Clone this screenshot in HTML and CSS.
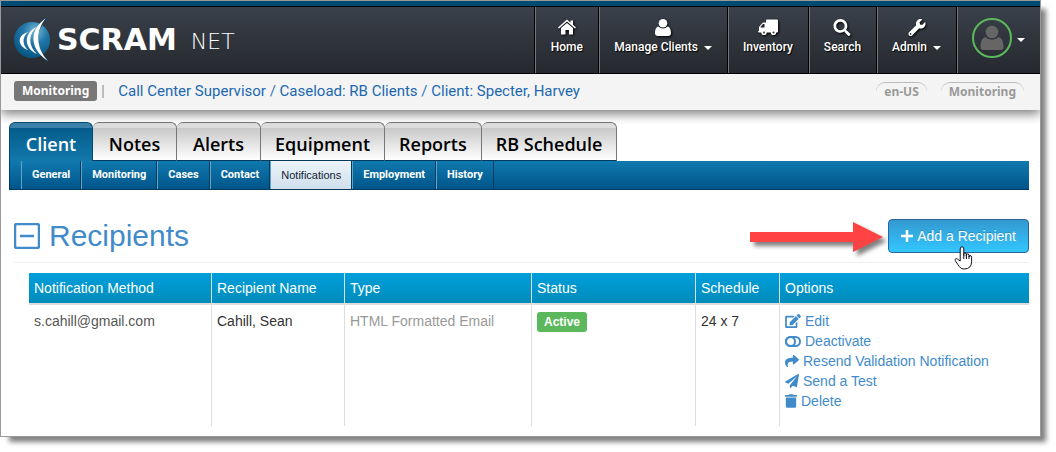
FILE: index.html
```html
<!DOCTYPE html>
<html lang="en-US">
<head>
<meta charset="utf-8">
<title>SCRAMNET - Notifications</title>
<link rel="stylesheet" href="styles.css">
</head>
<body>
<div class="window">
  <header class="header">
    <a class="logo" href="#">
      <svg class="logo-mark" viewBox="0 0 38 46" aria-hidden="true">
        <defs>
          <radialGradient id="orb" cx="60%" cy="25%" r="75%">
            <stop offset="0" stop-color="#7db9d6"/><stop offset=".45" stop-color="#2078a8"/><stop offset="1" stop-color="#075684"/>
          </radialGradient>
        </defs>
        <circle cx="19" cy="23" r="18" fill="url(#orb)"/>
        <path d="M33 1C21 13 20 32 35 44" fill="none" stroke="#123c58" stroke-width="2.500"/>
        <g fill="#fff">
          <path d="M33 1C17 12 15 31 35 44C23 31 22 14 33 1Z"/>
          <path d="M24 10C11 15 10 31 24 37C15 29 15 17 24 10Z"/>
          <path d="M15 15C4 18 4 29 15 33C9 28 9 20 15 15Z"/>
        </g>
      </svg>
      <span class="logo-main">SCRAM</span><span class="logo-sub">NET</span>
    </a>
    <nav class="main-nav" aria-label="Main">
      <a class="nav-item" href="#">
        <svg class="nav-icon" viewBox="0 0 18 16" aria-hidden="true"><path d="M9 0L0 8l1 1 8-7 8 7 1-1-3-2.700V1h-2.500v2.200z"/><path d="M3 8.500L9 3.500l6 5V15h-4v-4.500H7.500V15H3z"/></svg>
        <span>Home</span>
      </a>
      <a class="nav-item" href="#">
        <svg class="nav-icon" viewBox="0 0 16 17" aria-hidden="true"><circle cx="8" cy="4.300" r="4.300"/><path d="M3.500 7.500C6 10 10 10 12.500 7.500C15 8 16 11 16 14q0 3-3 3H3q-3 0-3-3C0 11 1 8 3.500 7.500z"/></svg>
        <span>Manage Clients <i class="caret"></i></span>
      </a>
      <a class="nav-item" href="#">
        <svg class="nav-icon wide" viewBox="0 0 20 16" aria-hidden="true"><path fill-rule="evenodd" d="M8 1q0-1 1-1h10q1 0 1 1v11q0 1-1 1h-1a2.600 2.600 0 0 1-5 0H8.500a2.600 2.600 0 0 1-5 0H1q-1 0-1-1l1-1V7.500L4 4q.7-1 2-1h2zM6.500 4.500H5L2.500 7.500v.5h4z"/><circle cx="6" cy="13" r="2.600"/><circle cx="15.500" cy="13" r="2.600"/><g class="hub"><circle cx="6" cy="13" r="1"/><circle cx="15.500" cy="13" r="1"/></g></svg>
        <span>Inventory</span>
      </a>
      <a class="nav-item" href="#">
        <svg class="nav-icon" viewBox="0 0 512 512" aria-hidden="true"><path d="M505 442.700L405.300 343c-4.500-4.500-10.600-7-17-7H372c27.600-35.300 44-79.700 44-128C416 93.100 322.900 0 208 0S0 93.100 0 208s93.100 208 208 208c48.300 0 92.700-16.400 128-44v16.300c0 6.400 2.500 12.500 7 17l99.700 99.700c9.400 9.400 24.600 9.400 33.900 0l28.300-28.300c9.400-9.400 9.400-24.600.1-34zM208 336c-70.700 0-128-57.200-128-128 0-70.700 57.200-128 128-128 70.700 0 128 57.200 128 128 0 70.700-57.200 128-128 128z"/></svg>
        <span>Search</span>
      </a>
      <a class="nav-item" href="#">
        <svg class="nav-icon" viewBox="0 0 512 512" aria-hidden="true"><path d="M507.730 109.100c-2.240-9.030-13.540-12.090-20.120-5.510l-74.360 74.360-67.880-11.310-11.310-67.880 74.360-74.360c6.620-6.620 3.430-17.900-5.660-20.160-47.380-11.740-99.550.91-136.580 37.930-39.640 39.640-50.550 97.100-34.050 147.200L18.740 402.760c-24.990 24.990-24.990 65.510 0 90.500 24.990 24.990 65.510 24.990 90.500 0l213.210-213.210c50.120 16.710 107.470 5.680 147.370-34.220 37.070-37.070 49.700-89.320 37.910-136.730zM64 472c-13.250 0-24-10.750-24-24 0-13.260 10.750-24 24-24s24 10.740 24 24c0 13.250-10.750 24-24 24z"/></svg>
        <span>Admin <i class="caret"></i></span>
      </a>
      <a class="nav-item user" href="#" aria-label="Account">
        <svg class="avatar" viewBox="0 0 40 40" aria-hidden="true"><circle cx="20" cy="20" r="19" fill="none" stroke="#5cb85c" stroke-width="2"/><g fill="#666"><circle cx="20" cy="14" r="6.300"/><path d="M13.500 19C17 22.500 23 22.500 26.500 19C30 20 31.500 24 31.500 29q0 3-3 3h-17q-3 0-3-3C8.500 24 10 20 13.500 19z"/></g></svg>
        <i class="caret"></i>
      </a>
    </nav>
  </header>

  <div class="crumb-bar">
    <span class="crumb-label">Monitoring</span>
    <span class="crumb-rule"></span>
    <nav class="crumbs" aria-label="Breadcrumb"><a href="#">Call Center Supervisor</a> / <a href="#">Caseload: RB Clients</a> / <a href="#">Client: Specter, Harvey</a></nav>
    <span class="pill">en-US</span>
    <span class="pill">Monitoring</span>
  </div>

  <nav class="tabs" aria-label="Sections">
    <a class="tab active" href="#">Client</a>
    <a class="tab" href="#">Notes</a>
    <a class="tab" href="#">Alerts</a>
    <a class="tab" href="#">Equipment</a>
    <a class="tab" href="#">Reports</a>
    <a class="tab" href="#">RB Schedule</a>
  </nav>
  <nav class="subnav" aria-label="Client pages">
    <a href="#">General</a>
    <a href="#">Monitoring</a>
    <a href="#">Cases</a>
    <a href="#">Contact</a>
    <a class="active" href="#">Notifications</a>
    <a href="#">Employment</a>
    <a href="#">History</a>
  </nav>

  <main class="content">
    <div class="section-head">
      <h1 class="title">
        <svg class="collapse" viewBox="0 0 26 26" aria-hidden="true"><rect x="1" y="1" width="24" height="24" rx="2"/><path d="M6 13h14"/></svg>
        Recipients
      </h1>
      <svg class="arrow" viewBox="0 0 136 30" aria-hidden="true"><path d="M0 10h103V0l30 15-30 15V20H0z"/></svg>
      <div class="add-wrap">
        <button class="add" type="button">
          <svg class="plus" viewBox="0 0 12 12" aria-hidden="true"><path d="M6 0v12M0 6h12"/></svg>
          Add a Recipient
        </button>
        <svg class="pointer" viewBox="0 0 19 24" aria-hidden="true"><path d="M6.200 15V3q0-2.200 1.800-2.200T9.800 3v6.500V7.600q1-1.300 2.600 0v2.600-1.800q1.300-1.200 2.600.2V11q0-1.300 1-1.500 1.600 0 1.600 1.800v4.200q0 7.500-7.500 7.500c-3.500 0-4.500-2-6-4.200L1.200 14.500c-.8-1.700 1.500-2.500 2.600-1.200zM9.800 9v4M12.400 9v4M15 10.500V13"/></svg>
      </div>
    </div>

    <table class="grid">
      <thead>
        <tr>
          <th class="c-method" scope="col">Notification Method</th>
          <th class="c-name" scope="col">Recipient Name</th>
          <th class="c-type" scope="col">Type</th>
          <th class="c-status" scope="col">Status</th>
          <th class="c-schedule" scope="col">Schedule</th>
          <th scope="col">Options</th>
        </tr>
      </thead>
      <tbody>
        <tr>
          <td class="email">s.cahill@gmail.com</td>
          <td>Cahill, Sean</td>
          <td class="muted">HTML Formatted Email</td>
          <td><span class="badge">Active</span></td>
          <td>24 x 7</td>
          <td>
            <ul class="options">
              <li><a href="#"><svg class="w16" viewBox="0 0 576 512" aria-hidden="true"><path d="M402.600 83.200l90.200 90.200c3.800 3.800 3.800 10 0 13.800L274.400 405.600l-92.800 10.300c-12.400 1.400-22.900-9.100-21.500-21.500l10.300-92.800L388.800 83.200c3.800-3.800 10-3.800 13.800 0zm162-22.900l-48.800-48.800c-15.200-15.200-39.900-15.200-55.200 0l-35.400 35.400c-3.800 3.800-3.800 10 0 13.800l90.200 90.200c3.800 3.800 10 3.800 13.800 0l35.400-35.400c15.200-15.300 15.200-40 0-55.200zM384 346.200V448H64V128h229.800c3.200 0 6.200-1.300 8.500-3.500l40-40c7.600-7.600 2.200-20.500-8.500-20.500H48C21.500 64 0 85.500 0 112v352c0 26.500 21.500 48 48 48h352c26.500 0 48-21.500 48-48V306.200c0-10.700-12.900-16-20.500-8.500l-40 40c-2.200 2.300-3.500 5.300-3.500 8.500z"/></svg>Edit</a></li>
              <li><a href="#"><svg class="w16 line" viewBox="0 0 16 14" aria-hidden="true"><rect x="1" y="3" width="14" height="9" rx="4.500"/><circle cx="5.500" cy="7.500" r="4.500"/></svg>Deactivate</a></li>
              <li><a href="#"><svg class="w14" viewBox="0 0 512 512" aria-hidden="true"><path d="M503.691 189.836L327.687 37.851C312.281 24.546 288 35.347 288 56.015v80.053C127.371 137.907 0 170.100 0 322.326c0 61.441 39.581 122.309 83.333 154.132 13.653 9.931 33.111-2.533 28.077-18.631C66.066 312.814 132.917 274.316 288 272.085V360c0 20.700 24.300 31.453 39.687 18.164l176.004-152c11.071-9.562 11.086-26.753 0-36.328z"/></svg>Resend Validation Notification</a></li>
              <li><a href="#"><svg class="w14" viewBox="0 0 512 512" aria-hidden="true"><path d="M476 3.200L12.500 270.600c-18.100 10.400-15.800 35.600 2.200 43.200L121 358.400l287.300-253.200c5.500-4.900 13.300 2.600 8.600 8.300L176 407v80.500c0 23.600 28.500 32.900 42.500 15.800L282 426l124.600 52.200c14.200 6 30.400-2.900 33-18.200l72-432C515 7.800 493.300-6.800 476 3.200z"/></svg>Send a Test</a></li>
              <li><a href="#"><svg class="w12" viewBox="0 0 448 512" aria-hidden="true"><path d="M32 464a48 48 0 0 0 48 48h288a48 48 0 0 0 48-48V128H32zm400-432H312l-9.400-18.700A24 24 0 0 0 281.100 0H166.800a23.720 23.720 0 0 0-21.400 13.300L136 32H16A16 16 0 0 0 0 48v32a16 16 0 0 0 16 16h416a16 16 0 0 0 16-16V48a16 16 0 0 0-16-16z"/></svg>Delete</a></li>
            </ul>
          </td>
        </tr>
      </tbody>
    </table>
  </main>
</div>
</body>
</html>
```
FILE: styles.css
```css
* { box-sizing: border-box; }

body {
  margin: 0;
  padding: 0 15px 15px 0;
  background: #fff;
  color: #333;
  font: 14px/20px "Liberation Sans", Arial, sans-serif;
}

a { color: inherit; text-decoration: none; }

.window {
  border: 1px solid #999;
  background: #fff;
  box-shadow: 7px 7px 5px -2px rgba(0, 0, 0, .5);
}

/* Header */
.header {
  display: flex;
  justify-content: space-between;
  height: 73px;
  border-top: 5px solid #004b73;
  border-bottom: 1px solid #000;
  background: linear-gradient(#3a414b, #26292e);
  box-shadow: inset 0 1px #000;
}

.logo {
  display: flex;
  align-items: center;
  padding-left: 12px;
  color: #fff;
  font-family: "DejaVu Sans", sans-serif;
}

.logo-mark { width: 38px; height: 46px; margin-right: 6px; }
.logo-main { font-size: 30px; font-weight: 700; line-height: 32px; }
.logo-sub { padding: 4px 0 0 14px; font-size: 22px; font-weight: 200; line-height: 28px; }

.main-nav { display: flex; padding-top: 1px; }

.nav-item {
  display: flex;
  flex-direction: column;
  align-items: center;
  gap: 2px;
  min-width: 64px;
  padding: 12px 15px 0;
  border-left: 1px solid #000;
  box-shadow: inset 1px 0 #73777c;
  color: #fff;
  font: 500 12px/18px Roboto, sans-serif;
  text-shadow: 1px 1px 1px #000;
}

.nav-icon {
  width: 18px;
  height: 17px;
  fill: #fff;
  filter: drop-shadow(1px 1px 1px #000);
}
.nav-icon.wide { width: 20px; }
.hub { fill: #333; }

.caret {
  display: inline-block;
  margin-left: 3px;
  border: 4px solid transparent;
  border-top-color: #fff;
  border-bottom: 0;
  vertical-align: middle;
}

.user { flex-direction: row; align-items: flex-start; padding-top: 11px; }
.user .caret { margin: 20px 0 0 3px; }
.avatar { width: 40px; height: 40px; }

/* Breadcrumb bar */
.crumb-bar {
  position: relative;
  display: flex;
  align-items: center;
  height: 36px;
  padding: 0 16px 2px 13px;
  background: #f4f4f4;
  box-shadow: 0 4px 10px rgba(0, 0, 0, .5);
  clip-path: inset(0 0 -14px 0);
}

.crumb-label {
  padding: 0 8px;
  border-radius: 3px;
  background: #777;
  color: #fff;
  font: 700 12px/20px "Noto Sans", sans-serif;
}

.crumb-rule { width: 2px; height: 13px; margin: 0 14px 0 5px; background: #bbb; }
.crumbs { flex: 1; color: #337ab7; font: 15px/20px Roboto, sans-serif; }
.crumbs a { color: #2068b0; }

.pill {
  margin-left: 14px;
  padding: 0 8px;
  border-top: 1px solid #bbb;
  border-radius: 10px;
  color: #999;
  font: 700 12px/18px "Noto Sans", sans-serif;
}

/* Tabs */
.tabs { display: flex; padding: 12px 8px 0; }

.tab {
  height: 39px;
  min-width: 84px;
  padding: 3px 14px 0;
  border: 1px solid #777;
  border-bottom-color: #003a5c;
  border-left-width: 0;
  border-radius: 6px 6px 0 0;
  background: linear-gradient(#ddd 5px, #c8c8c8 5px, #fff);
  color: #000;
  font: 600 18px/37px "Open Sans", sans-serif;
  text-align: center;
}

.tab.active {
  border: 1px solid #004a70;
  border-bottom: 0;
  background: linear-gradient(#3a80a8 5px, #055c8c 5px, #1278ab);
  color: #fff;
}

.subnav {
  display: flex;
  margin: 0 11px 0 8px;
  padding-left: 11px;
  border-bottom: 1px solid #003a5c;
  border-left: 1px solid #003a5c;
  background: linear-gradient(#1079ae, #00558a);
  color: #fff;
  font: 700 11px/28px Roboto, sans-serif;
}

.subnav a {
  padding: 0 10px;
  border-right: 1px solid #003a5c;
  border-left: 1px solid #5fa5c8;
}

.subnav .active {
  background: linear-gradient(#edf4f9, #cfdfeb);
  color: #123;
  font-family: "Liberation Sans", Arial, sans-serif;
  font-weight: 400;
}

/* Content */
.content { padding: 28px 11px 10px 13px; }

.section-head {
  display: flex;
  align-items: center;
  padding-bottom: 8px;
  border-bottom: 1px solid #eee;
}

.title {
  display: flex;
  flex: 1;
  align-items: center;
  gap: 9px;
  margin: 0;
  color: #428bca;
  font-size: 30px;
  font-weight: 400;
  line-height: 36px;
}

.collapse { width: 26px; height: 26px; fill: none; stroke: #428bca; stroke-width: 2.5; }

.arrow {
  width: 136px;
  height: 30px;
  margin: 2px 2px 0 0;
  overflow: visible;
  fill: #ff4343;
  filter: drop-shadow(4px 4px 2px rgba(0, 0, 0, .5));
}

.add-wrap { position: relative; }

.add {
  display: flex;
  align-items: center;
  gap: 4px;
  height: 34px;
  padding: 0 12px;
  border: 1px solid #2b669a;
  border-radius: 4px;
  background: linear-gradient(#3399d0, #33c6ff);
  color: #fff;
  font: 14px/20px "Liberation Sans", Arial, sans-serif;
  text-shadow: 0 -1px rgba(0, 0, 0, .2);
}

.plus { width: 12px; height: 12px; stroke: #fff; stroke-width: 2.5; }

.pointer {
  position: absolute;
  top: 27px;
  left: 66px;
  width: 19px;
  height: 24px;
  fill: #fff;
  stroke: #101020;
  stroke-width: 1;
}

.grid {
  width: calc(100% - 15px);
  margin: 10px 0 0 15px;
  border-collapse: separate;
  border-spacing: 0;
  table-layout: fixed;
}

.grid th {
  padding: 5px;
  border-bottom: 2px solid #ddd;
  background: linear-gradient(#009fdc, #008cba);
  background-clip: padding-box;
  color: #fff;
  font-weight: 400;
  text-align: left;
}

.grid td { padding: 6px 5px 15px; vertical-align: top; }
.grid th + th, .grid td + td { border-left: 1px solid #ddd; }

.c-method { width: 18.2%; }
.c-name { width: 13.3%; }
.c-type { width: 18.7%; }
.c-status { width: 16.4%; }
.c-schedule { width: 8.4%; }

.email { color: #555; }
.muted { color: #999; }

.badge {
  display: inline-block;
  padding: 0 7px;
  border-radius: 3px;
  background: #5cb85c;
  color: #fff;
  font-size: 12px;
  font-weight: 700;
}

.options { margin: 0; padding: 0; list-style: none; color: #428bca; }
.options a { display: flex; align-items: center; gap: 4px; }
.options svg { height: 14px; fill: currentColor; }
.options .line { fill: none; stroke: currentColor; stroke-width: 2; }
.w16 { width: 16px; }
.w14 { width: 14px; }
.w12 { width: 12px; }
```
